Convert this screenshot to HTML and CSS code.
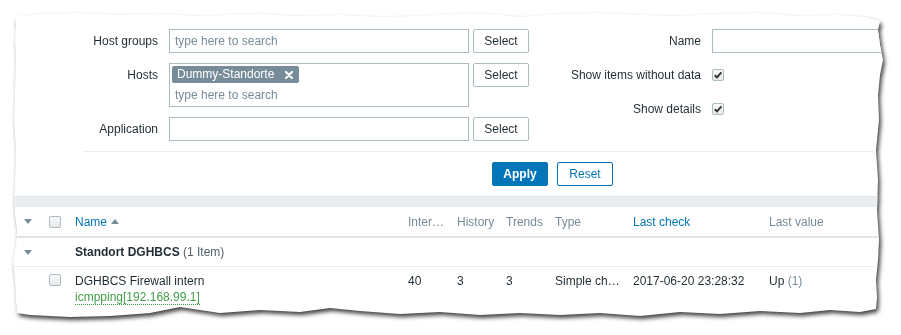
FILE: index.html
```html
<!DOCTYPE html>
<html>
<head>
<meta charset="utf-8">
<link rel="stylesheet" href="styles.css">
</head>
<body>
<div class="sheet">
  <div class="paper">
    <div class="filter">
      <div class="filter-cols">
        <div class="grid-left">
          <label class="lbl">Host groups</label>
          <div class="input"><span class="ph">type here to search</span></div>
          <button class="btn-sel">Select</button>

          <label class="lbl">Hosts</label>
          <div class="input multi">
            <span class="tag">Dummy-Standorte
              <svg class="tag-x" width="8" height="8" viewBox="0 0 8 8"><path d="M1 1 L7 7 M7 1 L1 7" stroke="#fff" stroke-width="2.2" stroke-linecap="round"/></svg>
            </span>
            <span class="ph">type here to search</span>
          </div>
          <button class="btn-sel">Select</button>

          <label class="lbl">Application</label>
          <div class="input"></div>
          <button class="btn-sel">Select</button>
        </div>
        <div class="grid-right">
          <label class="lbl">Name</label>
          <div class="input wide"></div>

          <label class="lbl">Show items without data</label>
          <div class="cell"><span class="cb checked"><svg width="10" height="10" viewBox="0 0 10 10"><path d="M1.8 5.2 L4 7.4 L8.4 2.4" fill="none" stroke="#333" stroke-width="2"/></svg></span></div>

          <label class="lbl">Show details</label>
          <div class="cell"><span class="cb checked"><svg width="10" height="10" viewBox="0 0 10 10"><path d="M1.8 5.2 L4 7.4 L8.4 2.4" fill="none" stroke="#333" stroke-width="2"/></svg></span></div>
        </div>
      </div>
      <div class="filter-sep"></div>
      <div class="filter-btns">
        <button class="btn-apply">Apply</button>
        <button class="btn-reset">Reset</button>
      </div>
    </div>
    <div class="gap-bar"></div>
    <div class="table">
      <div class="row head">
        <span class="arrow"></span>
        <span class="cb"></span>
        <span class="hname"><a class="link">Name</a><span class="sort-up"></span></span>
        <span class="muted">Inter…</span>
        <span class="muted">History</span>
        <span class="muted">Trends</span>
        <span class="muted">Type</span>
        <a class="link">Last check</a>
        <span class="muted">Last value</span>
      </div>
      <div class="row group">
        <span class="arrow"></span>
        <span></span>
        <span class="gname"><b>Standort DGHBCS</b> <span class="gcount">(1 Item)</span></span>
      </div>
      <div class="row data">
        <span></span>
        <span class="cb"></span>
        <span class="iname">DGHBCS Firewall intern<br><a class="key">icmpping[192.168.99.1]</a></span>
        <span>40</span>
        <span>3</span>
        <span>3</span>
        <span>Simple ch…</span>
        <span>2017-06-20 23:28:32</span>
        <span>Up <span class="count">(1)</span></span>
      </div>
    </div>
  </div>
</div>
</body>
</html>
```

FILE: styles.css
```css
* { box-sizing: border-box; }
html, body { margin: 0; padding: 0; background: #fff; }
body {
  font-family: "Liberation Sans", Arial, sans-serif;
  font-size: 12px;
  color: #1f2c33;
  width: 901px;
  height: 335px;
  overflow: hidden;
}
.sheet {
  width: 901px;
  height: 335px;
  filter: drop-shadow(2px 3px 2px rgba(0,0,0,0.75));
}
.paper {
  width: 901px;
  height: 335px;
  background: #fff;
  overflow: hidden;
  clip-path: polygon(
    15px 17px, 40px 14px, 80px 13px, 120px 15px, 160px 14px, 200px 16px, 260px 14px, 300px 16px,
    340px 15px, 380px 17px, 420px 16px, 470px 13px, 500px 15px, 520px 17px, 560px 14px, 600px 13px,
    640px 15px, 680px 16px, 720px 14px, 760px 13px, 800px 16px, 840px 15px, 866px 17px, 880px 21px,
    878px 30px, 880px 45px, 883px 60px, 880px 75px, 878px 95px, 879px 120px, 876px 150px, 878px 180px,
    877px 210px, 879px 240px, 878px 260px, 876px 280px, 877px 298px, 876px 309px,
    860px 312px, 830px 310px, 800px 313px, 760px 311px, 720px 314px, 680px 312px, 640px 316px,
    600px 313px, 560px 315px, 520px 313px, 480px 315px, 440px 312px, 400px 314px, 360px 311px,
    330px 308px, 300px 312px, 260px 310px, 220px 313px, 180px 307px, 150px 313px, 110px 316px,
    70px 317px, 30px 315px, 17px 313px,
    16px 300px, 15px 280px, 13px 262px, 16px 245px, 17px 230px, 15px 215px, 14px 200px, 15px 180px,
    16px 150px, 14px 120px, 15px 90px, 16px 60px, 15px 40px, 16px 25px
  );
}
.filter { padding-top: 29px; }
.filter-cols { display: flex; align-items: flex-start; }
.grid-left {
  display: grid;
  grid-template-columns: 158px 311px 60px;
  row-gap: 10px;
  align-items: start;
}
.grid-right {
  display: grid;
  grid-template-columns: 172px 200px;
  row-gap: 10px;
  align-items: center;
}
.lbl {
  text-align: right;
  line-height: 24px;
  white-space: nowrap;
}
.grid-left .input { margin-left: 11px; width: 300px; }
.grid-right .input { margin-left: 11px; }
.input {
  height: 24px;
  border: 1px solid #acbbc2;
  background: #fff;
  padding: 0 5px;
  line-height: 22px;
}
.input.wide { width: 200px; }
.input.multi { height: 44px; padding: 2px 2px; line-height: 16px; }
.input.multi .ph { display: block; padding-left: 3px; margin-top: 4px; }
.ph { color: #768d99; }
.tag {
  display: inline-flex;
  align-items: center;
  height: 17px;
  width: 127px;
  background: #768d99;
  color: #fff;
  border-radius: 2px;
  padding: 0 0 0 5px;
  line-height: 17px;
}
.tag-x { margin-left: 11px; }
.btn-sel {
  margin-left: 4px;
  width: 56px;
  height: 24px;
  border: 1px solid #acbbc2;
  background: #fff;
  border-radius: 2px;
  font: inherit;
  color: #1f2c33;
  padding: 0;
}
.cell { margin-left: 11px; height: 24px; display: flex; align-items: center; }
.cb {
  display: inline-flex;
  align-items: center;
  justify-content: center;
  width: 12px;
  height: 12px;
  border: 1px solid #acbbc2;
  border-radius: 2px;
  background: linear-gradient(#fafafa, #e8e8e8);
}
.filter-sep {
  margin: 10px 0 0 83px;
  border-top: 1px solid #ebeef0;
}
.filter-btns {
  display: flex;
  gap: 9px;
  padding: 10px 0 0 492px;
}
.btn-apply, .btn-reset {
  width: 56px;
  height: 24px;
  border-radius: 2px;
  font: inherit;
  padding: 0;
}
.btn-apply { background: #0275b8; border: 1px solid #0275b8; color: #fff; font-weight: bold; }
.btn-reset { background: #fff; border: 1px solid #0275b8; color: #0275b8; }
.gap-bar {
  margin-top: 10px;
  height: 11px;
  background: #ebeef0;
  border-top: 1px solid #dfe4e7;
}
.row {
  display: grid;
  grid-template-columns: 25px 26px 333px 49px 49px 49px 78px 136px 1fr;
  padding-left: 24px;
  align-items: center;
  white-space: nowrap;
}
.row.head { height: 31px; border-bottom: 2px solid #dfe4e7; }
.row.group { height: 29px; border-bottom: 1px solid #ebeef0; }
.row.data { align-items: start; padding-top: 6px; padding-bottom: 8px; line-height: 16px; }
.row.data .cb { margin-top: 1px; }
.arrow {
  width: 0; height: 0;
  border-left: 4px solid transparent;
  border-right: 4px solid transparent;
  border-top: 5px solid #768d99;
}
.link { color: #0275b8; }
.muted { color: #768d99; }
.hname { display: flex; align-items: center; }
.sort-up {
  margin-left: 4px;
  width: 0; height: 0;
  border-left: 4px solid transparent;
  border-right: 4px solid transparent;
  border-bottom: 5px solid #768d99;
}
.gcount { color: #4f5f68; }
.count { color: #768d99; }
.key { color: #429e47; border-bottom: 1px dotted #429e47; }
```
